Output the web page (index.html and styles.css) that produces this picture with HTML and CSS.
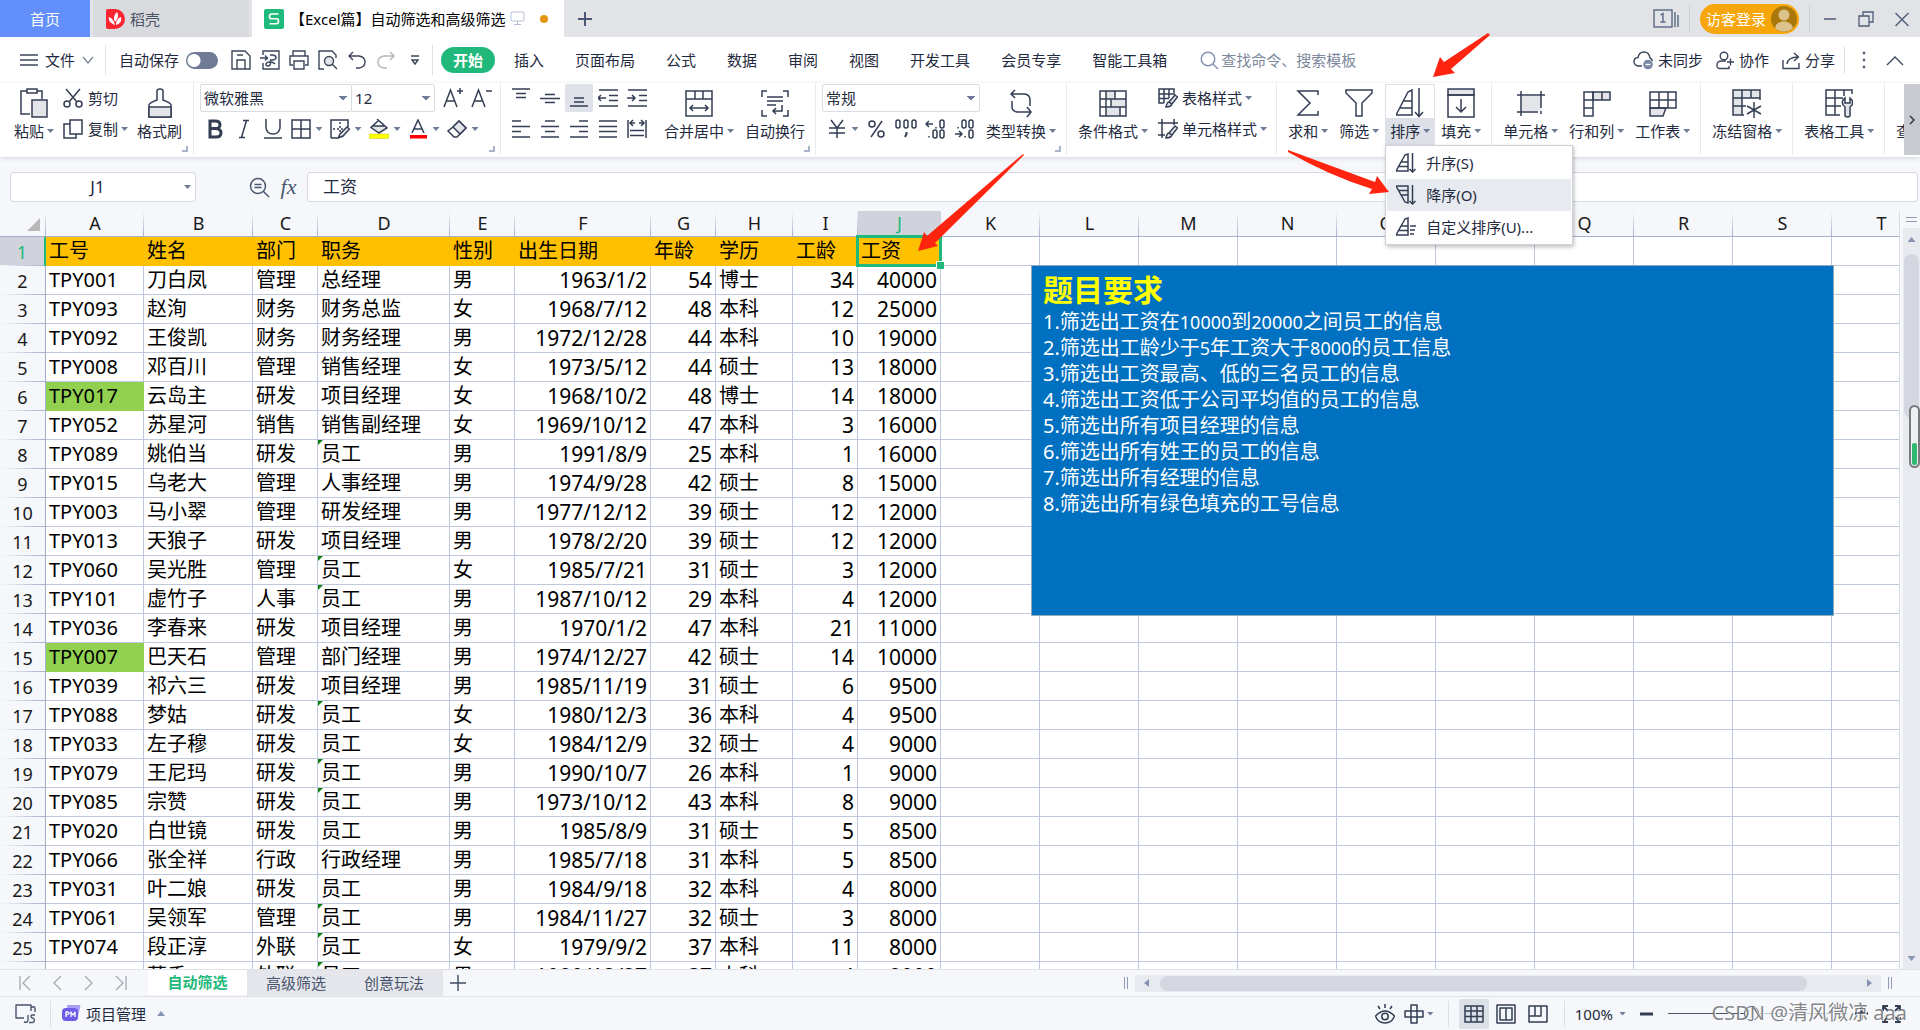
FILE: index.html
```html
<!DOCTYPE html>
<html lang="zh-CN">
<head>
<meta charset="utf-8">
<title>【Excel篇】自动筛选和高级筛选</title>
<link rel="stylesheet" href="styles.css">
</head>
<body>
<div class="app">

  <header class="titlebar">
    <button class="home-tab">首页</button>
    <button class="doc-tab docer">
      <svg width="20" height="20" viewBox="0 0 20 20"><path d="M2 0H9A10 10 0 0 1 9 20H2Q0 20 0 18V2Q0 0 2 0Z" fill="#fb2531"/><path d="M9 16C4 14 2 11 3 8C6 9 8 12 9 16ZM9 13C7 9 8 6 11 3C13 7 12 10 9 13ZM10 16C10 12 12 9 15 8C16 12 14 15 10 16Z" fill="#fff"/></svg>
      <span>稻壳</span>
    </button>
    <div class="doc-tab current">
      <svg width="20" height="20" viewBox="0 0 20 20"><rect width="20" height="20" rx="2" fill="#1fbb7d"/><path d="M14.5 5H7.5Q5.5 5 5.5 7.4T7.5 9.8H12.5Q14.5 9.8 14.5 12.2T12.5 14.8H5.5" fill="none" stroke="#fff" stroke-width="1.6"/></svg>
      <span class="doc-title">【Excel篇】自动筛选和高级筛选</span>
      <svg width="15" height="15" viewBox="0 0 15 15" fill="none" stroke="#b5c0d8"><rect x="1" y="1" width="13" height="9" rx="1"/><path d="M7.5 10V13.500M4 13.500H11"/></svg>
      <span class="unsaved"></span>
    </div>
    <button class="new-tab" aria-label="新建"><svg width="16" height="16" viewBox="0 0 16 16" stroke="#4b5874" stroke-width="2"><path d="M8 1V15M1 8H15"/></svg></button>
    <div class="window-tools">
      <button class="plain" aria-label="窗口"><svg width="26" height="19" viewBox="0 0 26 19" fill="none" stroke="#5b6883" stroke-width="1.400"><rect x="1" y="1" width="18" height="17"/><path d="M7.500 6L10 4.500V13M7.500 13H12.500M22 3V18M25 6V18"/></svg></button>
      <span class="bar-sep"></span>
      <button class="login"><span>访客登录</span><svg width="26" height="26" viewBox="0 0 26 26"><circle cx="13" cy="13" r="13" fill="#a9780b"/><circle cx="13" cy="9" r="5.500" fill="#dcc38c"/><path d="M4 22.500C5 13 21 13 22 22.500Q13 29 4 22.500Z" fill="#dcc38c"/></svg></button>
      <span class="bar-sep close-set"></span>
      <button class="plain win" aria-label="最小化"><svg width="16" height="16" viewBox="0 0 16 16" stroke="#4f5c77" stroke-width="1.500"><path d="M2 8H14"/></svg></button>
      <button class="plain win" aria-label="还原"><svg width="16" height="16" viewBox="0 0 16 16" fill="none" stroke="#4f5c77" stroke-width="1.300"><path d="M1 5H11V15H1ZM5 5V1H15V11H11"/></svg></button>
      <button class="plain win" aria-label="关闭"><svg width="16" height="16" viewBox="0 0 16 16" stroke="#4f5c77" stroke-width="1.400"><path d="M1.500 2L14.500 15M14.500 2L1.500 15"/></svg></button>
    </div>
  </header>

  <nav class="menubar">
    <button class="file-menu">
      <svg width="18" height="14" viewBox="0 0 18 14" stroke="#3c465b" stroke-width="1.400"><path d="M0 2H18M0 7H18M0 12H18"/></svg>
      <span>文件</span>
      <svg width="12" height="8" viewBox="0 0 12 8" fill="none" stroke="#7c8596" stroke-width="1.300"><path d="M1 1L6 7L11 1"/></svg>
    </button>
    <label class="autosave"><span>自动保存</span><input type="checkbox" role="switch"></label>
    <div class="quick">
      <button aria-label="保存"><svg width="20" height="20" viewBox="0 0 20 20"><path d="M1 1H14L19 6V19H1Z"/><path d="M6 19V10H14V19M6 5H12"/></svg></button>
      <button aria-label="输出为PDF"><svg width="20" height="20" viewBox="0 0 20 20"><path d="M3 5V1H19V19H3V13"/><path d="M0 8H7M5 5.500L7.500 8L5 10.500M10 5H13Q16 5.500 16 7.500T13 10H10.500V14Q10 16 8 16T6 14Q6.500 12 10 12T15 14"/></svg></button>
      <button aria-label="打印"><svg width="20" height="20" viewBox="0 0 20 20"><path d="M4 6V1H16V6M4 15H1V6H19V15H16"/><path d="M5 11H15V19H5Z"/></svg></button>
      <button aria-label="打印预览"><svg width="20" height="20" viewBox="0 0 20 20"><path d="M6 19H1V1H14L18 5V8"/><circle cx="11" cy="11" r="4.500" fill="#e4e6e9"/><path d="M14 14L19 19"/></svg></button>
      <button aria-label="撤销"><svg width="20" height="20" viewBox="0 0 20 20"><path d="M6 2L2 6L6 10M2 6H12Q18 7 18 12T12 18H9"/></svg></button>
      <button aria-label="恢复" class="faded"><svg width="20" height="20" viewBox="0 0 20 20"><path d="M14 2L18 6L14 10M18 6H8Q2 7 2 12T8 18H11"/></svg></button>
      <button aria-label="更多"><svg width="12" height="12" viewBox="0 0 12 12"><path d="M2 2H10M3 6H9L6 10Z"/></svg></button>
    </div>
    <div class="tabs">
      <button class="tab active">开始</button>
      <button class="tab">插入</button>
      <button class="tab">页面布局</button>
      <button class="tab">公式</button>
      <button class="tab">数据</button>
      <button class="tab">审阅</button>
      <button class="tab">视图</button>
      <button class="tab">开发工具</button>
      <button class="tab">会员专享</button>
      <button class="tab">智能工具箱</button>
    </div>
    <label class="search">
      <svg width="19" height="19" viewBox="0 0 19 19" fill="none" stroke="#8492b0" stroke-width="1.400"><circle cx="8" cy="8" r="6.800"/><path d="M13 13L18 18"/></svg>
      <input type="text" placeholder="查找命令、搜索模板" aria-label="查找命令、搜索模板">
    </label>
    <div class="share-tools">
      <button><svg width="21" height="19" viewBox="0 0 21 19" fill="none" stroke="#3c465b" stroke-width="1.400"><path d="M9 15H5Q1 14 1 10.500T5 6.500Q6 1 11 1T17 7Q19 8 19.500 10"/><circle cx="15" cy="13.500" r="4.800" fill="#7b88a6" stroke="none"/><path d="M12.500 13.500H17.500" stroke="#fff"/></svg><span>未同步</span></button>
      <button><svg width="19" height="19" viewBox="0 0 19 19" fill="none" stroke="#3c465b" stroke-width="1.400"><circle cx="8" cy="5" r="3.800"/><path d="M10 10H6Q1 10 1 14T4 17.500H13V15M11 11H18M14.500 7.500V14.500"/></svg><span>协作</span></button>
      <button><svg width="19" height="19" viewBox="0 0 19 19" fill="none" stroke="#3c465b" stroke-width="1.400"><path d="M1 9V17.500H17V12M5 13Q6 6 16 6M12 2L16.500 6L12 10"/></svg><span>分享</span></button>
      <span class="bar-sep"></span>
      <button class="dots" aria-label="更多"><svg width="4" height="18" viewBox="0 0 4 18" fill="#5a6784"><circle cx="2" cy="2" r="1.400"/><circle cx="2" cy="9" r="1.400"/><circle cx="2" cy="16" r="1.400"/></svg></button>
      <button aria-label="收起功能区"><svg width="18" height="11" viewBox="0 0 18 11" fill="none" stroke="#3c465b" stroke-width="1.300"><path d="M1 10L9 2L17 10"/></svg></button>
    </div>
  </nav>

  <section class="ribbon">
    <div class="group first">
      <button class="big"><svg width="28" height="30" viewBox="0 0 28 30"><path d="M10 26H1V3H7M17 3H22V11M7 1H17V5H7Z"/><rect x="12" y="12" width="15" height="17" fill="#e3e5e8"/></svg><span class="lbl">粘贴<i class="caret"></i></span></button>
      <div class="rows">
        <button class="small"><svg width="20" height="20" viewBox="0 0 20 20"><path d="M3 1L14 14M17 1L6 14"/><circle cx="4" cy="16" r="3"/><circle cx="16" cy="16" r="3"/></svg><span>剪切</span></button>
        <button class="small"><svg width="20" height="20" viewBox="0 0 20 20"><path d="M7 1H19V15H7ZM7 5H1V19H13V15"/></svg><span class="lbl">复制<i class="caret"></i></span></button>
      </div>
      <button class="big"><svg width="28" height="30" viewBox="0 0 28 30"><path d="M3 29V17Q3 15 11 12V3Q11 1 14 1T17 3V12Q25 15 25 17V29Z"/><path d="M3 19H25V29H3Z" fill="#e3e5e8"/></svg><span class="lbl">格式刷</span></button>
      <i class="corner"></i>
    </div>

    <div class="group">
      <div class="rows">
        <div class="row">
          <select class="font-name" aria-label="字体"><option>微软雅黑</option></select>
          <select class="font-size" aria-label="字号"><option>12</option></select>
          <button class="tool wide" aria-label="增大字号"><svg width="22" height="22" viewBox="0 0 22 22"><path d="M2 20L8.500 3L15 20M4.500 14H12.500M18 1V7M15 4H21"/></svg></button>
          <button class="tool wide" aria-label="减小字号"><svg width="22" height="22" viewBox="0 0 22 22"><path d="M2 20L8.500 3L15 20M4.500 14H12.500M16 4H22"/></svg></button>
        </div>
        <div class="row">
          <button class="tool" aria-label="加粗"><svg width="20" height="20" viewBox="0 0 20 20"><path d="M5 2H10Q15 2 15 5.800T10 9.500H5ZM5 9.500H11Q16 10 16 14T11 18H5Z" stroke-width="3"/></svg></button>
          <button class="tool" aria-label="倾斜"><svg width="20" height="20" viewBox="0 0 20 20"><path d="M9 1.500H15M5 18.500H11M12.500 1.500L7.500 18.500"/></svg></button>
          <button class="tool" aria-label="下划线"><svg width="20" height="20" viewBox="0 0 20 20"><path d="M3 0V9Q4 15 10 15T17 9V0M1 19H19"/></svg></button>
          <button class="tool drop" aria-label="边框"><svg width="20" height="20" viewBox="0 0 20 20"><path d="M1 1H19V19H1ZM10 1V19M1 10H19"/></svg><i class="caret"></i></button>
          <button class="tool drop" aria-label="绘图边框"><svg width="20" height="20" viewBox="0 0 20 20"><path d="M1 19V1H18V8M1 19H7"/><path d="M10 3V14M3 10H13" stroke-dasharray="2 2"/><path d="M8 19L10 15L17 8L19.500 10L13 17Z" fill="#e3e5e8"/></svg><i class="caret"></i></button>
          <button class="tool drop" aria-label="填充颜色"><svg width="20" height="20" viewBox="0 0 20 20"><path d="M5 7L15 7L18 9L10 14L2 9Z" fill="#e3e5e8" stroke="none"/><path d="M8 0L18 9L10 14L2 8.500L9 2M4 7H15"/><rect x="0" y="15" width="20" height="4.500" fill="#ffff00" stroke="#c8c832" stroke-width=".5"/></svg><i class="caret"></i></button>
          <button class="tool drop" aria-label="字体颜色"><svg width="20" height="20" viewBox="0 0 20 20"><path d="M4 14L10 1L16 14M6 10H14"/><rect x="2" y="16" width="17" height="3.500" fill="#f00" stroke="none"/></svg><i class="caret"></i></button>
          <button class="tool drop" aria-label="清除"><svg width="20" height="20" viewBox="0 0 20 20"><path d="M6 8L12 2L19 9L10 18H7L1 12Z"/><path d="M6 8L12 2L19 9L13 15Z" fill="#e3e5e8"/></svg><i class="caret"></i></button>
        </div>
      </div>
      <i class="corner"></i>
    </div>

    <div class="group">
      <div class="align">
        <button aria-label="顶端对齐"><svg width="20" height="20" viewBox="0 0 20 20"><path d="M1 1H19M5 5.500H15M5 9.500H15"/></svg></button>
        <button aria-label="垂直居中"><svg width="20" height="20" viewBox="0 0 20 20"><path d="M0 10.500H20M5 6.500H15M5 14.500H15"/></svg></button>
        <button aria-label="底端对齐" class="on"><svg width="20" height="20" viewBox="0 0 20 20"><path d="M1 18H19M5 14H15M5 10H15"/></svg></button>
        <button aria-label="减少缩进"><svg width="20" height="20" viewBox="0 0 20 20"><path d="M1 2H20M11 7.500H20M11 12.500H20M1 18H20M0 10H8M3 7L0 10L3 13"/></svg></button>
        <button aria-label="增加缩进"><svg width="20" height="20" viewBox="0 0 20 20"><path d="M1 2H20M12 7.500H20M12 12.500H20M1 18H20M0 10H8M5 7L8 10L5 13"/></svg></button>
        <button aria-label="左对齐"><svg width="20" height="20" viewBox="0 0 20 20"><path d="M1 2H10M1 7.500H19M1 12.500H10M1 18H19"/></svg></button>
        <button aria-label="水平居中"><svg width="20" height="20" viewBox="0 0 20 20"><path d="M5 2H15M1 7.500H19M5 12.500H15M1 18H19"/></svg></button>
        <button aria-label="右对齐"><svg width="20" height="20" viewBox="0 0 20 20"><path d="M10 2H19M1 7.500H19M10 12.500H19M1 18H19"/></svg></button>
        <button aria-label="两端对齐"><svg width="20" height="20" viewBox="0 0 20 20"><path d="M1 2H19M1 7.500H19M1 12.500H19M1 18H19"/></svg></button>
        <button aria-label="分散对齐"><svg width="20" height="20" viewBox="0 0 20 20"><path d="M1 1V19M19 1V19M3 4H8M12 4H17M6 1L3 4L6 7M14 1L17 4L14 7M3 11.500H17M3 16.500H17"/></svg></button>
      </div>
      <button class="big"><svg width="28" height="30" viewBox="0 0 28 30"><path d="M1 3H27V28H1ZM1 11H27M10 3V11M18 3V11M5 20H23M8 17L5 20L8 23M20 17L23 20L20 23"/></svg><span class="lbl">合并居中<i class="caret"></i></span></button>
      <button class="big"><svg width="28" height="30" viewBox="0 0 28 30"><path d="M6 3H1V9M22 3H27V9M1 22V28H6M27 22V28H22M6 9H22M6 13H22M6 17H15M21 17V23H12M15 20L12 23L15 26"/></svg><span class="lbl">自动换行</span></button>
      <i class="corner"></i>
    </div>

    <div class="group">
      <div class="rows numbers">
        <select class="num-format" aria-label="数字格式"><option>常规</option></select>
        <div class="row">
          <button class="tool drop" aria-label="货币"><svg width="20" height="20" viewBox="0 0 20 20"><path d="M4 1L10 9L16 1M2 9H18M2 14H18M10 9V19"/></svg><i class="caret"></i></button>
          <button class="tool num" aria-label="百分比"><svg width="18" height="20" viewBox="0 0 18 20"><circle cx="4" cy="5" r="3"/><circle cx="13" cy="15" r="3"/><path d="M14 2L3 18"/></svg></button>
          <button class="tool num" aria-label="千位分隔"><svg width="22" height="20" viewBox="0 0 22 20"><rect x="1" y="1" width="4" height="8" rx="2"/><rect x="9" y="1" width="4" height="8" rx="2"/><rect x="17" y="1" width="4" height="8" rx="2"/><path d="M11.500 13V15L10 18" stroke-width="2"/></svg></button>
          <button class="tool num" aria-label="增加小数位"><svg width="21" height="20" viewBox="0 0 21 20"><path d="M1 5H8M4 2L1 5L4 8M11 8V9.500M4 17V18.500"/><rect x="15" y="1" width="4" height="8" rx="2"/><rect x="8" y="11" width="4" height="8" rx="2"/><rect x="15" y="11" width="4" height="8" rx="2"/></svg></button>
          <button class="tool num" aria-label="减少小数位"><svg width="21" height="20" viewBox="0 0 21 20"><path d="M1 15H8M5 12L8 15L5 18M4 8V9.500M11 17V18.500"/><rect x="8" y="1" width="4" height="8" rx="2"/><rect x="15" y="1" width="4" height="8" rx="2"/><rect x="15" y="11" width="4" height="8" rx="2"/></svg></button>
        </div>
      </div>
      <button class="big"><svg width="28" height="30" viewBox="0 0 28 30"><path d="M8 2L4 6L8 10M4 6H18Q23 7 23 12V18M20 19L24 24L20 29M24 24H10Q5 23 5 19V13"/></svg><span class="lbl">类型转换<i class="caret"></i></span></button>
      <i class="corner"></i>
    </div>

    <div class="group">
      <button class="big"><svg width="28" height="30" viewBox="0 0 28 30"><path d="M7 3H16V11H7ZM12 11H27V19H12ZM7 19H21V28H7Z" fill="#e3e5e8" stroke="none"/><path d="M1 3H27V28H1ZM1 11H27M1 19H27M7 3V28M16 3V11M12 11V19M21 19V28"/></svg><span class="lbl">条件格式<i class="caret"></i></span></button>
      <div class="rows">
        <button class="small tight"><svg width="20" height="20" viewBox="0 0 20 20"><path d="M6 15H1V1H16V7M1 6H15M1 10.500H11M6 1V15M11 1V10"/><path d="M11 14L17 7L19.500 9L14 16ZM8 19Q9 14 11 14L14 16Q13 19 8 19Z" fill="#e3e5e8"/></svg><span class="lbl">表格样式<i class="caret"></i></span></button>
        <button class="small tight"><svg width="20" height="20" viewBox="0 0 20 20"><path d="M4 0V19M0 4H20M16 0V6M0 16H7"/><path d="M11 14L17 7L19.500 9L14 16ZM8 19Q9 14 11 14L14 16Q13 19 8 19Z" fill="#e3e5e8"/></svg><span class="lbl">单元格样式<i class="caret"></i></span></button>
      </div>
    </div>

    <div class="group">
      <button class="big"><svg width="28" height="30" viewBox="0 0 28 30"><path d="M24 7V3H4L16 15L4 27H24V23"/></svg><span class="lbl">求和<i class="caret"></i></span></button>
      <button class="big"><svg width="28" height="30" viewBox="0 0 28 30"><path d="M1 2H27V5L17 15V28H11V15L1 5Z"/></svg><span class="lbl">筛选<i class="caret"></i></span></button>
      <div class="sort">
        <button class="big open" aria-expanded="true"><svg width="28" height="30" viewBox="0 0 28 30"><path d="M16 27H0L12 4L16 2ZM7 13H16M4 20H16M23 0V28M19 24L23 28.500L27 24"/></svg><span class="lbl">排序<i class="caret"></i></span></button>
        <div class="menu" role="menu">
          <button role="menuitem"><svg width="20" height="20" viewBox="0 0 20 20"><path d="M12 18H0L9 2L12 1ZM5 9H12M3 13.500H12M16.500 0V19M13.500 16L16.500 19L19.500 16"/></svg>升序(S)</button>
          <button role="menuitem" class="hover"><svg width="20" height="20" viewBox="0 0 20 20"><path d="M12 1H0L9 17L12 18ZM3 5.500H12M5 10H12M16.500 0V19M13.500 16L16.500 19L19.500 16"/></svg>降序(O)</button>
          <button role="menuitem"><svg width="20" height="20" viewBox="0 0 20 20"><path d="M12 18H0L9 2L12 1ZM5 9H12M3 13.500H12M14 9H20M14 13H19M14 17H18"/></svg>自定义排序(U)...</button>
        </div>
      </div>
      <button class="big"><svg width="28" height="30" viewBox="0 0 28 30"><path d="M1 1H27V7H1Z" fill="#e3e5e8"/><path d="M1 7H27V29H1ZM14 11V24M9 19L14 24L19 19"/></svg><span class="lbl">填充<i class="caret"></i></span></button>
    </div>

    <div class="group">
      <button class="big"><svg width="28" height="30" viewBox="0 0 28 30"><path d="M4 8H24V23H4Z" fill="#e3e5e8" stroke="none"/><path d="M4 3V28M24 3V20M0 7H28M0 24H21M24 23V26"/></svg><span class="lbl">单元格<i class="caret"></i></span></button>
      <button class="big"><svg width="28" height="30" viewBox="0 0 28 30"><path d="M10 4H27V12H10Z" fill="#e3e5e8"/><path d="M1 4H10V28H1ZM1 12H10M1 20H10M19 4V12"/></svg><span class="lbl">行和列<i class="caret"></i></span></button>
      <button class="big"><svg width="28" height="30" viewBox="0 0 28 30"><path d="M1 20H17L14 28H1Z" fill="#e3e5e8"/><path d="M1 4H27V20H1ZM1 12H27M10 4V20M19 4V20"/></svg><span class="lbl">工作表<i class="caret"></i></span></button>
    </div>

    <div class="group">
      <button class="big"><svg width="30" height="30" viewBox="0 0 30 30"><path d="M1 2H27V10H10V27H1Z" fill="#e3e5e8" stroke="none"/><path d="M12 27H1V2H28V12M1 10H28M1 18H14M10 2V27M19 2V10M22 14V30M15 18L29 26M15 26L29 18"/></svg><span class="lbl">冻结窗格<i class="caret"></i></span></button>
    </div>

    <div class="group">
      <button class="big"><svg width="28" height="30" viewBox="0 0 28 30"><path d="M15 27H1V2H27V6M1 10H18M1 18H16M10 2V27M19 2V8"/><path d="M20 10V15H25V10Q29 13 27 17L25 19V28Q22.500 30 20 28V19Q16 16 18 12Z" fill="#e3e5e8"/></svg><span class="lbl">表格工具<i class="caret"></i></span></button>
    </div>

    <div class="group cut">
      <button class="big"><span class="lbl">查找</span></button>
    </div>
    <button class="ribbon-next" aria-label="向右滚动"><svg width="8" height="10" viewBox="0 0 8 10" fill="none" stroke="#2f3a50" stroke-width="1.600"><path d="M2 1L6 5L2 9"/></svg></button>
  </section>

  <div class="formula-bar">
    <div class="name-box"><input type="text" value="J1" aria-label="名称框"><i class="caret"></i></div>
    <div class="fx-tools">
      <button class="plain" aria-label="查找公式"><svg width="21" height="21" viewBox="0 0 21 21" fill="none" stroke="#4a566e" stroke-width="1.500"><circle cx="9" cy="9" r="7.500"/><path d="M14.500 14.500L20 20M5.500 7.500H12.500M5.500 10.500H12.500"/></svg></button>
      <button class="plain fx" aria-label="插入函数">fx</button>
    </div>
    <input class="formula" type="text" value="工资" aria-label="编辑栏">
  </div>

  <main class="work">
    <div class="sheet">
      <table class="grid">
        <colgroup id="cols"></colgroup>
        <thead id="head"></thead>
        <tbody id="body"></tbody>
      </table>
      <aside class="note">
        <h2>题目要求</h2>
        <p>1.筛选出工资在<span class="figure">10000</span>到<span class="figure">20000</span>之间员工的信息</p>
        <p>2.筛选出工龄少于<span class="figure">5</span>年工资大于<span class="figure">8000</span>的员工信息</p>
        <p>3.筛选出工资最高、低的三名员工的信息</p>
        <p>4.筛选出工资低于公司平均值的员工的信息</p>
        <p>5.筛选出所有项目经理的信息</p>
        <p>6.筛选出所有姓王的员工的信息</p>
        <p>7.筛选出所有经理的信息</p>
        <p>8.筛选出所有绿色填充的工号信息</p>
      </aside>
    </div>
    <div class="vscroll">
      <span class="split"></span>
      <div class="vtrack"><i class="arrow up"></i><span class="vthumb"></span><i class="arrow down"></i></div>
      <span class="gauge"><span class="gauge-level"></span></span>
    </div>
  </main>

  <div class="sheet-bar">
    <div class="sheet-nav">
      <button aria-label="第一个"><svg width="12" height="16" viewBox="0 0 12 16"><path d="M1 1V15M11 1L4 8L11 15"/></svg></button>
      <button aria-label="上一个"><svg width="12" height="16" viewBox="0 0 12 16"><path d="M10 1L3 8L10 15"/></svg></button>
      <button aria-label="下一个"><svg width="12" height="16" viewBox="0 0 12 16"><path d="M2 1L9 8L2 15"/></svg></button>
      <button aria-label="最后一个"><svg width="12" height="16" viewBox="0 0 12 16"><path d="M11 1V15M1 1L8 8L1 15"/></svg></button>
    </div>
    <button class="sheet-tab active">自动筛选</button>
    <button class="sheet-tab">高级筛选</button>
    <button class="sheet-tab">创意玩法</button>
    <button class="plain add-sheet" aria-label="新建工作表"><svg width="16" height="16" viewBox="0 0 16 16" stroke="#3f4a60" stroke-width="1.400"><path d="M8 0V16M0 8H16"/></svg></button>
    <div class="hscroll">
      <span class="grip"></span>
      <div class="htrack"><i class="arrow left"></i><div class="hlane"><span class="hthumb"></span></div><i class="arrow right"></i></div>
      <span class="grip"></span>
    </div>
  </div>

  <footer class="status">
    <button class="plain" aria-label="JS宏"><svg width="22" height="20" viewBox="0 0 22 20" fill="none" stroke="#4a566e" stroke-width="1.400"><path d="M9 14H1V1H16V7M16 4Q20 1 20 5V8M13 11V16Q13 19 9 18M20 11H17Q15 12 17 14H18Q21 16 18 18.500H14"/></svg></button>
    <span class="bar-sep"></span>
    <button class="project"><svg width="19" height="17" viewBox="0 0 19 17"><path d="M5 0H17Q19 0 18 3L16 11H5Z" fill="#a99df5"/><rect x="0" y="3" width="16" height="13" rx="4" fill="#6c5ce7"/><path d="M4 12V7H6Q7.500 7.500 7 8.500T4 10M9 12V7L11 10L13 7V12" fill="none" stroke="#fff" stroke-width="1.300"/></svg><span>项目管理</span><i class="arrow up"></i></button>
    <div class="view-tools">
      <button class="plain" aria-label="护眼模式"><svg width="20" height="20" viewBox="0 0 20 20"><path d="M0.500 12Q10 2 19.500 12Q17 19 10 19T0.500 12ZM10 0V4M3 2L5 5M17 2L15 5"/><circle cx="10" cy="12.500" r="3.200"/></svg></button>
      <button class="plain drop" aria-label="阅读模式"><svg width="20" height="20" viewBox="0 0 20 20"><path d="M7 1H13V19H7ZM1 7H19V13H1Z"/></svg><i class="caret"></i></button>
      <span class="bar-sep"></span>
      <button class="plain view on" aria-label="普通视图"><svg width="20" height="18" viewBox="0 0 20 18"><path d="M1 1H19V17H1ZM1 6H19M1 11.500H19M7 1V17M13 1V17"/></svg></button>
      <button class="plain view" aria-label="分页预览"><svg width="20" height="20" viewBox="0 0 20 20"><path d="M1 1H19V19H1ZM4 4H16V16H4ZM10 4V16"/></svg></button>
      <button class="plain view" aria-label="页面布局"><svg width="20" height="18" viewBox="0 0 20 18"><path d="M1 1H19V17H1ZM1 11H13V1M7 1V11"/></svg></button>
      <span class="bar-sep"></span>
      <button class="zoom-value">100%<i class="caret"></i></button>
      <button class="plain minus" aria-label="缩小"><svg width="13" height="4" viewBox="0 0 13 4"><path d="M0 2H13" stroke-width="3"/></svg></button>
      <input class="zoom" type="range" min="10" max="200" value="97" aria-label="缩放">
      <button class="plain" aria-label="放大"><svg width="13" height="13" viewBox="0 0 13 13"><path d="M6.500 0V13M0 6.500H13" stroke-width="2.400"/></svg></button>
      <button class="plain full" aria-label="全屏"><svg width="19" height="18" viewBox="0 0 19 18"><path d="M1 6V1H6M13 1H18V6M18 12V17H13M6 17H1V12M2 2L6 6M17 2L13 6M17 16L13 12M2 16L6 12" stroke-width="1.800"/></svg></button>
    </div>
    <span class="credit">CSDN @清风微凉 aaa</span>
  </footer>
</div>

<svg class="marks" width="1500" height="270" viewBox="0 0 1500 270" fill="#ff2410" aria-hidden="true">
  <path d="M1488 33L1490 35L1451 69L1455 73L1433 77L1440 57L1444 62Z"/>
  <path d="M1288 150L1375 182L1377 176L1389 192L1369 194L1372 189Q1330 176 1288 152Z"/>
  <path d="M1023 154L1024 155L935 243L938 246L918 251L924 232L927 236Z"/>
</svg>
<script src="sheet.js"></script>
</body>
</html>
```

FILE: sheet.js
```js
const widths = { A: 98, B: 109, C: 65, D: 132, E: 65, F: 136, G: 65, H: 77, I: 65, J: 83 };
const letters = [...'ABCDEFGHIJKLMNOPQRST'];
const rightAligned = new Set(['F', 'G', 'I', 'J']);
const greenRows = new Set([6, 15]);
const textFlagRows = new Set([8, 12, 13, 17, 19, 20, 24, 25, 26]);

const rows = `工号 姓名 部门 职务 性别 出生日期 年龄 学历 工龄 工资
TPY001 刀白凤 管理 总经理 男 1963/1/2 54 博士 34 40000
TPY093 赵洵 财务 财务总监 女 1968/7/12 48 本科 12 25000
TPY092 王俊凯 财务 财务经理 男 1972/12/28 44 本科 10 19000
TPY008 邓百川 管理 销售经理 女 1973/5/12 44 硕士 13 18000
TPY017 云岛主 研发 项目经理 女 1968/10/2 48 博士 14 18000
TPY052 苏星河 销售 销售副经理 女 1969/10/12 47 本科 3 16000
TPY089 姚伯当 研发 员工 男 1991/8/9 25 本科 1 16000
TPY015 乌老大 管理 人事经理 男 1974/9/28 42 硕士 8 15000
TPY003 马小翠 管理 研发经理 男 1977/12/12 39 硕士 12 12000
TPY013 天狼子 研发 项目经理 男 1978/2/20 39 硕士 12 12000
TPY060 吴光胜 管理 员工 女 1985/7/21 31 硕士 3 12000
TPY101 虚竹子 人事 员工 男 1987/10/12 29 本科 4 12000
TPY036 李春来 研发 项目经理 男 1970/1/2 47 本科 21 11000
TPY007 巴天石 管理 部门经理 男 1974/12/27 42 硕士 14 10000
TPY039 祁六三 研发 项目经理 男 1985/11/19 31 硕士 6 9500
TPY088 梦姑 研发 员工 女 1980/12/3 36 本科 4 9500
TPY033 左子穆 研发 员工 女 1984/12/9 32 硕士 4 9000
TPY079 王尼玛 研发 员工 男 1990/10/7 26 本科 1 9000
TPY085 宗赞 研发 员工 男 1973/10/12 43 本科 8 9000
TPY020 白世镜 研发 员工 男 1985/8/9 31 硕士 5 8500
TPY066 张全祥 行政 行政经理 男 1985/7/18 31 本科 5 8500
TPY031 叶二娘 研发 员工 男 1984/9/18 32 本科 4 8000
TPY061 吴领军 管理 员工 男 1984/11/27 32 硕士 3 8000
TPY074 段正淳 外联 员工 女 1979/9/2 37 本科 11 8000
TPY076 葛香 外联 员工 男 1980/12/27 37 本科 4 8000`.split('\n').map(line => line.split(' '));

function make(tag, parent, className, text) {
  const node = parent.appendChild(document.createElement(tag));
  if (className) node.className = className;
  if (text) node.textContent = text;
  return node;
}

const cols = document.getElementById('cols');
make('col', cols).style.width = '46px';
letters.forEach(l => { make('col', cols).style.width = (widths[l] || 99) + 'px'; });

const headRow = make('tr', document.getElementById('head'));
make('th', headRow, 'select-all');
letters.forEach(l => make('th', headRow, l === 'J' ? 'picked' : '', l));

const body = document.getElementById('body');
rows.forEach((cells, index) => {
  const number = index + 1;
  const tr = make('tr', body, number === 1 ? 'titles' : '');
  make('th', tr, '', number < 26 ? String(number) : '');
  letters.forEach((l, i) => {
    const names = [];
    if (number === 1 && i < 10) names.push('fill');
    if (number > 1 && rightAligned.has(l)) names.push('num');
    if (l === 'A' && greenRows.has(number)) names.push('green');
    if (l === 'D' && textFlagRows.has(number)) names.push('flag');
    if (l === 'J' && number === 1) names.push('cursor');
    make('td', tr, names.join(' '), cells[i]);
  });
});
```

FILE: styles.css
```css
* { box-sizing: border-box; }

body {
  margin: 0;
  font-family: "Noto Sans", "Noto Sans CJK SC", sans-serif;
  font-size: 15px;
  line-height: 20px;
  color: #1f2a40;
  background: #f5f7fa;
  overflow: hidden;
}

button, input, select {
  font: inherit;
  color: inherit;
  border: 0;
  background: none;
  padding: 0;
  margin: 0;
  outline: 0;
}
button { display: flex; align-items: center; justify-content: center; white-space: nowrap; flex: none; }
svg { display: block; flex: none; }

.app { display: flex; flex-direction: column; height: 100vh; }

.caret {
  flex: none;
  width: 7px;
  height: 4px;
  background: #6f7c99;
  clip-path: polygon(0 0, 100% 0, 50% 100%);
}
.bar-sep { flex: none; width: 1px; height: 26px; background: #dcdee3; }

/* title bar */
.titlebar { display: flex; flex: none; height: 37px; background: #e1e3e7; }
.home-tab { width: 90px; background: #628ffb; color: #fff; margin-right: 3px; }
.doc-tab { display: flex; align-items: center; }
.docer { width: 156px; justify-content: flex-start; gap: 4px; padding-left: 13px; background: #d8dade; color: #4b5362; margin-right: 3px; }
.current { width: 312px; padding-left: 12px; background: #fff; color: #000; }
.doc-title { padding: 0 4px 0 6px; white-space: nowrap; }
.unsaved { width: 8px; height: 8px; border-radius: 50%; background: #e6960c; margin-left: 15px; }
.new-tab { width: 42px; }
.window-tools { display: flex; align-items: center; margin-left: auto; }
.window-tools .bar-sep { background: #cccfd6; margin: 0 10px; }
.window-tools .close-set { margin-right: 2px; }
.login { gap: 5px; width: 99px; height: 30px; border-radius: 15px; background: #f6a609; color: #fff; padding-left: 4px; }
.win { width: 36px; }

/* menu bar */
.menubar { display: flex; flex: none; align-items: center; height: 46px; background: #fff; }
.file-menu { gap: 7px; padding: 0 10px 0 19px; border-right: 1px solid #dfe1e5; height: 30px; width: 106px; }
.autosave { display: flex; align-items: center; gap: 7px; padding: 0 8px 0 13px; white-space: nowrap; }
.autosave input {
  appearance: none;
  width: 32px;
  height: 17px;
  border-radius: 9px;
  background: radial-gradient(circle at 8px 50%, #fff 6px, #6f7b94 7px);
}
.quick { display: flex; border-right: 1px solid #dfe1e5; height: 30px; padding-right: 3px; }
.quick button { width: 29px; }
.quick svg { fill: none; stroke: #3c465b; stroke-width: 1.4; }
.quick .faded svg { stroke: #b3b6bc; }
.tabs { display: flex; gap: 1px; padding-left: 8px; }
.tab { height: 26px; padding: 0 15px; }
.tab.active { width: 54px; padding: 0; margin-right: 3px; border-radius: 13px; background: #21b97b; color: #fff; font-weight: 700; }
.search { display: flex; align-items: center; gap: 2px; padding-left: 18px; }
.search input { width: 150px; }
.search input::placeholder { color: #7d889d; opacity: 1; }
.share-tools { display: flex; align-items: center; margin-left: auto; padding-right: 16px; }
.share-tools button { gap: 4px; margin-right: 13px; }
.share-tools .bar-sep { margin-right: 17px; margin-left: -4px; }
.share-tools .dots { margin-right: 20px; }
.share-tools button:last-child { margin-right: 0; }

/* ribbon */
.ribbon { position: relative; z-index: 2; display: flex; flex: none; height: 74px; background: #fff; box-shadow: 0 1px 4px rgba(40, 50, 70, .18); }
.ribbon svg { fill: none; stroke: #333e54; stroke-width: 1.5; }
.group { position: relative; display: flex; flex: none; align-items: flex-start; gap: 1px; height: 72px; padding: 1px 5px 0 6px; border-right: 1px solid #e8eaee; }
.group.first { padding-left: 9px; gap: 0; padding-right: 6px; }
.group.cut { flex: 1 1 0; min-width: 0; overflow: hidden; border: 0; }
.big { flex-direction: column; justify-content: flex-end; gap: 3px; height: 61px; padding: 0 5px 4px; }
.lbl { display: flex; align-items: center; gap: 3px; }
.rows { display: flex; flex-direction: column; gap: 3px; }
.row { display: flex; align-items: center; height: 28px; }
.small { justify-content: flex-start; gap: 5px; height: 28px; padding: 0 4px; }
.small.tight { gap: 4px; }
.corner { position: absolute; right: 5px; bottom: 3px; width: 6px; height: 6px; border: solid #a9b3c9; border-width: 0 2px 2px 0; }
.ribbon select {
  appearance: none;
  height: 28px;
  border: 1px solid #d9dce2;
  border-radius: 2px;
  padding-left: 3px;
  background: conic-gradient(from -50deg at 50% 100%, #6f7c99 100deg, transparent 0) no-repeat right 4px center / 8px 4px;
}
.ribbon .font-name { width: 152px; }
.ribbon .font-size { width: 84px; margin: 0 4px 0 -1px; }
.ribbon .num-format { width: 158px; }
.tool { width: 29px; height: 28px; }
.tool.wide { width: 28px; }
.tool.drop { width: 39px; gap: 5px; }
.tool.num { width: 29px; }
.numbers .row { justify-content: space-between; padding-left: 1px; padding-right: 1px; }
.align { display: grid; grid-template-columns: repeat(5, 28px); grid-auto-rows: 28px; gap: 3px 1px; margin-right: 7px; }
.align .on { background: #dfe3e9; border-radius: 2px; }
.sort { position: relative; }
.big.open { background: linear-gradient(#fff 34px, #dde1e7 34px); box-shadow: inset 0 0 0 1px #dde1e7; }
.menu {
  position: absolute;
  top: 61px;
  left: 0;
  width: 188px;
  padding: 1px;
  background: #fff;
  border: 1px solid #cfd2d8;
  box-shadow: 1px 2px 4px rgba(0, 0, 0, .25);
}
.menu button { width: 100%; height: 32px; justify-content: flex-start; gap: 10px; padding-left: 9px; }
.menu .hover { background: #e7eaef; }
.ribbon-next { width: 16px; height: 71px; background: #c9cbd1; margin-top: 1px; }
.ribbon-next svg { stroke: #2f3a50; }

/* formula bar */
.formula-bar { display: flex; flex: none; align-items: center; height: 54px; padding: 6px 2px 0 10px; font-size: 17px; }
.name-box { display: flex; align-items: center; width: 186px; height: 30px; padding-right: 4px; background: #fff; border: 1px solid #d5d8df; border-radius: 3px; }
.name-box input { flex: 1; min-width: 0; text-align: center; }
.plain { flex: none; }
.fx-tools { display: flex; align-items: center; gap: 9px; padding: 0 9px 0 53px; }
.fx { font: italic 22px/22px "Liberation Serif", serif; color: #4a566e; width: 19px; }
.formula { flex: 1; height: 30px; padding: 0 15px 3px; background: #fff; border: 1px solid #d5d8df; border-radius: 3px; }

/* grid */
.work { display: flex; flex: 1; min-height: 0; gap: 3px; }
.sheet { position: relative; flex: 1; min-width: 0; overflow: hidden; border-right: 1px solid #d9dce4; background: #fff; }
.grid { table-layout: fixed; width: 0; border-collapse: separate; border-spacing: 0; font-size: 20px; line-height: 28px; color: #000; }
.grid th { font-size: 18px; font-weight: 400; color: #1a1a1a; padding: 0; text-align: center; background: #f5f7fa; }
.grid td { height: 29px; padding: 0 3px; border: solid #c0c8dd; border-width: 0 1px 1px 0; white-space: nowrap; position: relative; }
.grid thead th {
  height: 26px;
  line-height: 25px;
  border-bottom: 1px solid #a6b0cc;
  background: linear-gradient(#f5f7fa, #a6b0cc) no-repeat right / 1px 100% #f5f7fa;
}
.grid tbody th {
  height: 29px;
  border-right: 1px solid #a6b0cc;
  background: linear-gradient(90deg, #f5f7fa, #a6b0cc) no-repeat bottom / 100% 1px #f5f7fa;
}
.grid thead .picked { background: #d0d3db; color: #1fb97c; }
.grid .titles th { background-color: #d0d3db; color: #1fb97c; border-right: 2px solid #1fb97c; }
.grid .select-all { position: relative; }
.select-all::after { content: ""; position: absolute; right: 6px; bottom: 5px; width: 13px; height: 13px; background: #b9b9b9; clip-path: polygon(100% 0, 100% 100%, 0 100%); }
.grid .fill { background: #ffc000; border-color: #ffc000; }
.grid .green { background: #92d050; border-color: #92d050; }
.grid .num { text-align: right; font-size: 21px; }
.flag::before { content: ""; position: absolute; left: 0; top: 0; width: 5px; height: 5px; background: #118011; clip-path: polygon(0 0, 100% 0, 0 100%); }
.cursor::after { content: ""; position: absolute; inset: -2px; border: 3px solid #1fb97c; z-index: 1; }
.cursor::before { content: ""; position: absolute; right: -4px; bottom: -4px; width: 7px; height: 7px; border: solid #fff; border-width: 1px 0 0 1px; background: #1fb97c; z-index: 2; }
.note {
  position: absolute;
  left: 1031px;
  top: 54px;
  width: 803px;
  height: 351px;
  padding: 5px 11px;
  border: 1px solid #8fa9bd;
  background: #0070c0;
  color: #fff;
  font-size: 20px;
  line-height: 26px;
}
.note h2 { margin: 0; font-size: 30px; line-height: 38px; color: #ff0; }
.note p { margin: 0; }
.figure { font-size: 18px; }

.vscroll { position: relative; display: flex; flex-direction: column; flex: none; width: 17px; }
.split { height: 5px; margin: 6px 3px; border: solid #8d99b5; border-width: 1px 0; }
.vtrack { display: flex; flex-direction: column; align-items: center; flex: 1; padding: 9px 0 8px; background: #e8eaf0; }
.vthumb { width: 15px; height: 164px; margin: 12px 0 auto; border-radius: 8px; background: #d4d7e0; }
.arrow { flex: none; background: #8794b1; }
.arrow.up { width: 8px; height: 5px; clip-path: polygon(50% 0, 100% 100%, 0 100%); }
.arrow.down { width: 8px; height: 5px; clip-path: polygon(0 0, 100% 0, 50% 100%); }
.arrow.left { width: 5px; height: 8px; clip-path: polygon(0 50%, 100% 0, 100% 100%); }
.arrow.right { width: 5px; height: 8px; clip-path: polygon(0 0, 100% 50%, 0 100%); }
.gauge { position: absolute; right: 0; top: 194px; display: flex; align-items: flex-end; width: 11px; height: 63px; padding: 1px; border: 2px solid #77797d; border-radius: 6px; background: #eef0f3; }
.gauge-level { width: 5px; height: 22px; border-radius: 2px; background: #2eb872; }

/* sheet tabs */
.sheet-bar { display: flex; flex: none; align-items: flex-start; height: 28px; border: solid #dfe1e7; border-width: 1px 0; }
.sheet-nav { display: flex; align-items: center; gap: 20px; height: 25px; padding: 0 21px 0 19px; }
.sheet-nav svg { fill: none; stroke: #a5a9b2; stroke-width: 1.3; }
.sheet-tab { width: 98px; height: 26px; background: #e5e6ec; color: #47536b; padding-bottom: 1px; }
.sheet-tab.active { width: 99px; height: 25px; background: #fff; color: #1fb97c; font-weight: 700; }
.add-sheet { width: 30px; height: 26px; }
.hscroll { display: flex; align-items: center; gap: 7px; flex: 0 1 768px; height: 26px; margin-left: auto; margin-right: 28px; }
.grip { width: 4px; height: 12px; border: solid #8d99b5; border-width: 0 1px; }
.htrack { display: flex; align-items: center; flex: 1; height: 17px; padding: 0 9px; background: #e8eaf0; }
.hlane { flex: 1; margin: 0 11px; }
.hthumb { display: block; width: 93%; height: 15px; border-radius: 8px; background: #d4d7e0; }

/* status bar */
.status { position: relative; display: flex; flex: none; align-items: center; height: 33px; padding: 0 19px 0 15px; }
.status svg { stroke-linejoin: round; }
.status > .bar-sep { margin: 0 11px 0 13px; }
.project { gap: 5px; }
.project .arrow { margin-left: 6px; }
.view-tools { display: flex; align-items: center; margin-left: auto; }
.view-tools svg { fill: none; stroke: #333e54; stroke-width: 1.5; }
.view-tools .drop { gap: 3px; margin-left: 9px; }
.view-tools .bar-sep { margin: 0 10px 0 14px; }
.view { width: 30px; height: 30px; margin-right: 2px; }
.view-tools .view + .bar-sep { margin: 0 10px 0 9px; }
.view.on { background: #dbdfe6; border-radius: 2px; }
.zoom-value { gap: 6px; }
.view-tools .minus { margin: 0 15px 0 14px; }
.zoom { appearance: none; width: 180px; height: 16px; margin-right: 7px; background: linear-gradient(90deg, #4a566e 47%, #c5c9d1 47%) no-repeat center / 100% 1px; }
.zoom::-webkit-slider-thumb { appearance: none; width: 15px; height: 15px; border-radius: 50%; border: 1px solid #4a566e; background: #f5f7fa; }
.full { margin-left: 14px; }
.credit { position: absolute; right: 13px; top: 3px; font-size: 20px; line-height: 26px; color: rgba(110, 112, 116, .85); text-shadow: 1px 1px 0 #fff; white-space: nowrap; }

.marks { position: absolute; left: 0; top: 0; z-index: 5; pointer-events: none; }
```
